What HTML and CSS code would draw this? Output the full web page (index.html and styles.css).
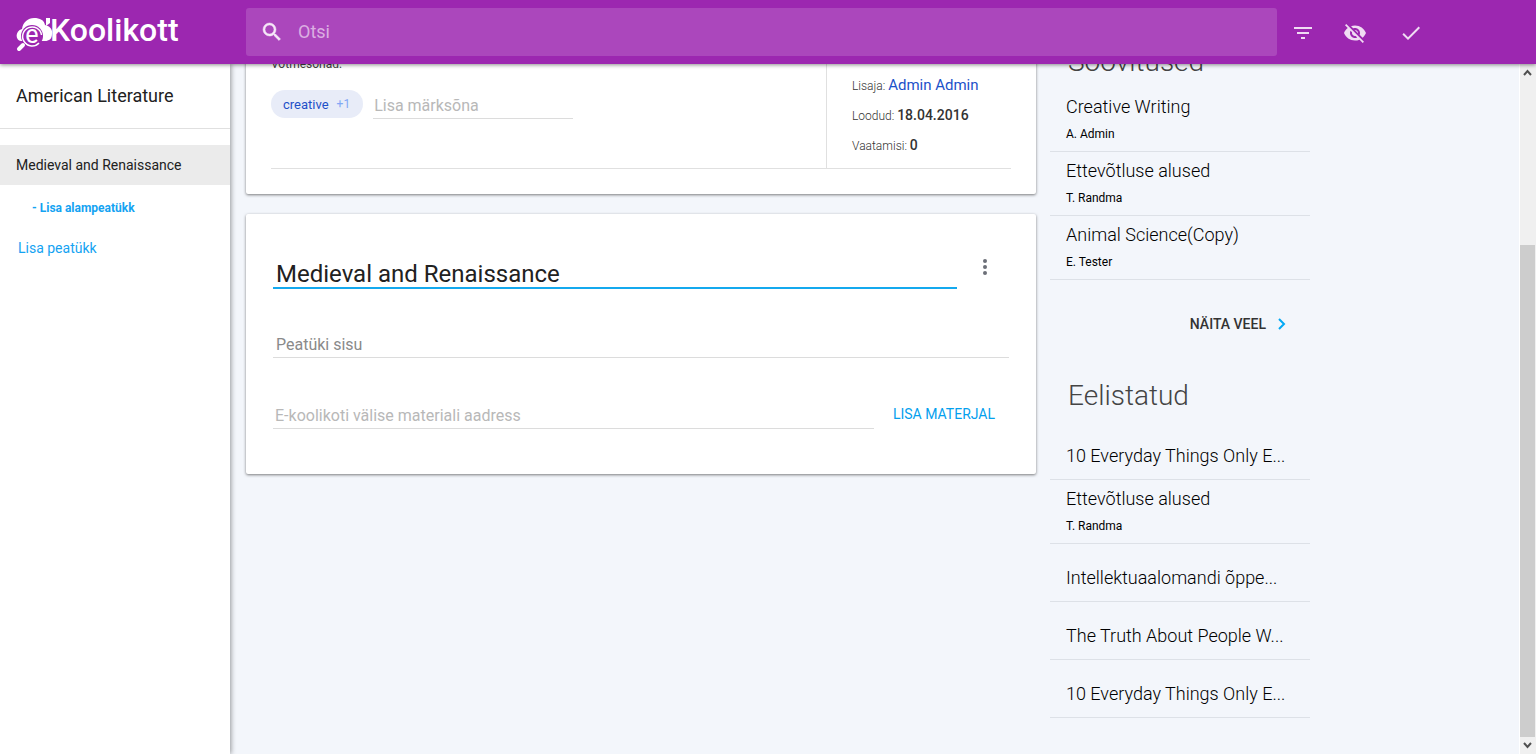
FILE: index.html
```html
<!DOCTYPE html>
<html lang="et">
<head>
<meta charset="utf-8">
<title>eKoolikott</title>
<link rel="stylesheet" href="styles.css">
</head>
<body>
<header class="topbar">
  <a class="logo" href="#" aria-label="eKoolikott">
    <svg class="logo-mark" width="38" height="36" viewBox="0 0 38 36">
      <path fill="#fff" d="M5 25C-1 24 -1 15 6 13C7 6 12 2 18 2C24 2 28 4 29 9C34 10 37 14 36 18C36 23 33 25 29 25L12 25Z"/>
      <path fill="#fff" d="M30 2h4v5l-4 3z"/>
      <circle cx="16" cy="20" r="11" fill="#9c27b0"/>
      <path d="M23 27A9.500 9.500 0 1 1 25.500 19" fill="none" stroke="#fff" stroke-width="1.500"/>
      <path d="M9 28L3 34" stroke="#9c27b0" stroke-width="7"/>
      <path d="M7 29L3 33" stroke="#fff" stroke-width="4" stroke-linecap="round"/>
      <text x="16" y="27" text-anchor="middle" class="logo-e">e</text>
    </svg>
    <span class="logo-text">Koolikott</span>
  </a>
  <label class="search">
    <svg width="24" height="24" viewBox="0 0 24 24"><path fill="currentColor" stroke="currentColor" stroke-width=".5" d="M15.5 14h-.79l-.28-.27A6.47 6.47 0 0 0 16 9.5 6.5 6.5 0 1 0 9.500 16c1.610 0 3.090-.59 4.230-1.570l.27.28v.79l5 4.990L20.490 19l-4.990-5zm-6 0C7.010 14 5 11.990 5 9.500S7.010 5 9.500 5 14 7.010 14 9.500 11.990 14 9.500 14z"/></svg>
    <input class="search-input" type="text" placeholder="Otsi" aria-label="Otsi">
  </label>
  <nav class="actions">
    <button class="icon-btn" aria-label="Filter"><svg width="24" height="24" viewBox="0 0 24 24"><path fill="currentColor" d="M10 18h4v-2h-4v2zM3 6v2h18V6H3zm3 7h12v-2H6v2z"/></svg></button>
    <button class="icon-btn" aria-label="Peida"><svg width="24" height="24" viewBox="0 0 24 24"><path fill="currentColor" d="M12 7c2.760 0 5 2.240 5 5 0 .65-.13 1.260-.36 1.830l2.920 2.920c1.510-1.260 2.700-2.890 3.430-4.750-1.730-4.390-6-7.500-11-7.500-1.400 0-2.740.25-3.980.7l2.160 2.160C10.740 7.130 11.350 7 12 7zM2 4.270l2.280 2.280.46.46C3.080 8.300 1.780 10.020 1 12c1.730 4.390 6 7.500 11 7.500 1.550 0 3.030-.3 4.380-.84l.42.42L19.730 22 21 20.730 3.270 3 2 4.270zM7.530 9.800l1.550 1.550c-.05.21-.08.43-.08.65 0 1.660 1.340 3 3 3 .22 0 .44-.03.65-.08l1.550 1.550c-.67.33-1.410.53-2.200.53-2.760 0-5-2.240-5-5 0-.79.2-1.530.53-2.200zm4.310-.78l3.150 3.150.02-.16c0-1.660-1.340-3-3-3l-.17.01z"/></svg></button>
    <button class="icon-btn" aria-label="Salvesta"><svg width="24" height="24" viewBox="0 0 24 24"><path fill="currentColor" d="M9 16.170L4.830 12l-1.420 1.410L9 19 21 7l-1.410-1.410z"/></svg></button>
  </nav>
</header>
<div class="body">
  <aside class="toc">
    <h2 class="toc-title">American Literature</h2>
    <a class="toc-item" href="#chapter">Medieval and Renaissance</a>
    <a class="toc-sub" href="#">- Lisa alampeatükk</a>
    <a class="toc-add" href="#">Lisa peatükk</a>
  </aside>
  <div class="page">
    <main class="main">
      <section class="card info">
        <div class="info-grid">
          <div class="tags">
            <div class="tags-label">Võtmesõnad:</div>
            <div class="tags-row">
              <button class="chip">creative <span class="chip-count">+1</span></button>
              <input class="field tag-input" type="text" placeholder="Lisa märksõna" aria-label="Lisa märksõna">
            </div>
          </div>
          <div class="meta">
            <div>Lisaja: <a class="author" href="#">Admin Admin</a></div>
            <div>Loodud: <b>18.04.2016</b></div>
            <div>Vaatamisi: <b>0</b></div>
          </div>
        </div>
      </section>
      <section class="card chapter" id="chapter">
        <div class="title-row">
          <input class="field title-input" type="text" value="Medieval and Renaissance" aria-label="Pealkiri">
          <button class="icon-btn more" aria-label="Rohkem"><svg width="24" height="24" viewBox="0 0 24 24"><g fill="#6c6f78"><circle cx="12" cy="6" r="2"/><circle cx="12" cy="12" r="2"/><circle cx="12" cy="18" r="2"/></g></svg></button>
        </div>
        <input class="field body-input" type="text" placeholder="Peatüki sisu" aria-label="Peatüki sisu">
        <div class="material-row">
          <input class="field url-input" type="text" placeholder="E-koolikoti välise materiali aadress" aria-label="E-koolikoti välise materiali aadress">
          <button class="add-btn">LISA MATERJAL</button>
        </div>
      </section>
    </main>
    <aside class="related">
      <h3 class="heading first">Soovitused</h3>
      <ul class="list">
        <li><a class="item" href="#"><span class="name">Creative Writing</span><span class="by">A. Admin</span></a></li>
        <li><a class="item" href="#"><span class="name">Ettevõtluse alused</span><span class="by">T. Randma</span></a></li>
        <li><a class="item" href="#"><span class="name">Animal Science(Copy)</span><span class="by">E. Tester</span></a></li>
      </ul>
      <button class="show-more">NÄITA VEEL <svg width="8" height="12" viewBox="0 0 8 12"><path d="M1 1l5 5-5 5" fill="none" stroke="#03a9f4" stroke-width="2"/></svg></button>
      <h3 class="heading">Eelistatud</h3>
      <ul class="list">
        <li><a class="item single" href="#"><span class="name">10 Everyday Things Only E...</span></a></li>
        <li><a class="item" href="#"><span class="name">Ettevõtluse alused</span><span class="by">T. Randma</span></a></li>
        <li><a class="item single" href="#"><span class="name">Intellektuaalomandi õppe...</span></a></li>
        <li><a class="item single" href="#"><span class="name">The Truth About People W...</span></a></li>
        <li><a class="item single" href="#"><span class="name">10 Everyday Things Only E...</span></a></li>
      </ul>
    </aside>
  </div>
  <div class="scrollbar" aria-hidden="true">
    <svg width="15" height="17" viewBox="0 0 15 17"><path d="M4 11l3.500-4 3.500 4" fill="none" stroke="#505050" stroke-width="2"/></svg>
    <div class="thumb"></div>
    <svg width="15" height="17" viewBox="0 0 15 17"><path d="M4 6l3.500 4 3.500-4" fill="none" stroke="#505050" stroke-width="2"/></svg>
  </div>
</div>
</body>
</html>
```
FILE: styles.css
```css
* { box-sizing: border-box; }
body {
  margin: 0;
  height: 100vh;
  display: flex;
  flex-direction: column;
  overflow: hidden;
  background: #f3f6fb;
  color: #212121;
  font-family: Roboto, "Liberation Sans", sans-serif;
  font-size: 14px;
}
a { color: inherit; text-decoration: none; }
button { border: 0; padding: 0; background: none; font: inherit; color: inherit; cursor: pointer; }
svg { display: block; flex: none; }

.topbar {
  position: relative;
  z-index: 2;
  flex: none;
  height: 64px;
  display: flex;
  align-items: center;
  background: #9c27b0;
  box-shadow: 0 1px 4px rgba(0, 0, 0, .45);
}
.logo { flex: none; width: 246px; padding-left: 16px; display: flex; align-items: center; color: #fff; }
.logo-mark { margin-top: 4px; }
.logo-e { font: 400 25px Roboto, sans-serif; fill: #fff; }
.logo-text { margin: -4px 0 0 -4px; font-size: 32px; font-weight: 500; line-height: 36px; }
.search {
  flex: 1;
  height: 48px;
  display: flex;
  align-items: center;
  gap: 12px;
  padding: 0 14px;
  border-radius: 3px;
  background: #ab47bc;
  color: #f6e8f8;
}
.search-input { flex: 1; min-width: 0; border: 0; outline: 0; padding: 0 2px 2px; background: none; color: #fff; font: 18px Roboto, sans-serif; }
.search-input::placeholder { color: #dbaee2; opacity: 1; }
.actions { flex: none; width: 259px; padding: 2px 0 0 14px; display: flex; gap: 28px; color: #f0dcf3; }
.icon-btn:last-child { margin-left: 4px; }

.body { flex: 1; min-height: 0; display: flex; }
.toc {
  position: relative;
  z-index: 1;
  flex: none;
  width: 230px;
  display: flex;
  flex-direction: column;
  background: #fff;
  box-shadow: 1px 0 5px rgba(0, 0, 0, .4);
}
.toc-title { margin: 0 0 16px; padding: 0 16px; border-bottom: 1px solid #e0e0e0; font-size: 18px; font-weight: 400; line-height: 64px; }
.toc-item { padding: 0 16px; background: #ebebeb; line-height: 40px; }
.toc-sub { padding: 0 32px; color: #14a3f2; font-size: 12px; font-weight: 700; line-height: 46px; }
.toc-add { padding: 0 18px; color: #14a3f2; line-height: 34px; }

.page {
  flex: 1;
  min-width: 0;
  overflow: hidden;
  display: grid;
  grid-template-columns: minmax(0, 790px) 260px;
  align-items: start;
  gap: 14px;
  padding-left: 16px;
}
.main { display: flex; flex-direction: column; gap: 20px; }
.card { background: #fff; border-radius: 2px; box-shadow: 0 1px 3px rgba(0, 0, 0, .5); }
.info { margin-top: -8px; padding: 0 25px 25px; }
.info-grid { display: flex; border-bottom: 1px solid #e0e0e0; }
.tags { flex: 1; min-width: 0; }
.tags-label { color: #424242; font-size: 12px; line-height: 16px; }
.tags-row { display: flex; align-items: flex-start; gap: 10px; margin-top: 18px; }
.chip { height: 28px; padding: 0 13px 0 12px; display: flex; align-items: center; gap: 8px; border-radius: 14px; background: #e8ecf8; color: #1f50c8; font-size: 13px; }
.chip-count { color: #82a7f5; font-size: 12px; }
.field { min-width: 0; border: 0; border-bottom: 1px solid #dcdcdc; border-radius: 0; outline: 0; background: none; color: #212121; font: 16px Roboto, sans-serif; }
.field::placeholder { color: #b8b8b8; opacity: 1; }
.tag-input { width: 200px; height: 29px; padding: 3px 1px 0; }
.meta { width: 185px; padding: 14px 0 8px 25px; border-left: 1px solid #e0e0e0; color: #333; font-size: 12px; font-weight: 300; }
.meta div { height: 30px; line-height: 30px; }
.meta b { font-size: 14px; font-weight: 500; }
.author { color: #1c51c9; font-size: 15px; font-weight: 400; }

.chapter { padding: 40px 27px 45px; }
.title-row { display: flex; align-items: flex-start; }
.title-input { flex: 1; height: 35px; padding: 6px 3px 0; border-bottom: 2px solid #14a9ee; font-size: 24px; }
.title-input + .more { margin: 1px 12px 0 16px; }
.body-input { width: 100%; height: 30px; margin-top: 39px; padding: 4px 3px 0; }
.body-input::placeholder { color: #8a8a8a; }
.material-row { display: flex; align-items: center; gap: 19px; margin-top: 40px; }
.url-input { flex: 1; height: 31px; padding: 4px 2px 0; }
.add-btn { margin-right: 14px; color: #03a0ee; }

.related { margin-top: -22px; }
.heading { margin: 0; padding-left: 18px; color: #444; font-size: 28px; font-weight: 300; line-height: 36px; }
.heading.first { padding-top: 2px; margin-bottom: 8px; }
.list { margin: 0; padding: 0; list-style: none; }
.item { display: block; height: 64px; padding: 10px 16px 0; border-bottom: 1px solid #dde1e7; color: #000; }
.item.single { height: 58px; padding-top: 25px; }
.name { display: block; white-space: nowrap; font-size: 18px; font-weight: 300; line-height: 18px; }
.by { display: block; margin-top: 10px; font-size: 12px; line-height: 16px; }
.show-more { margin: 33px 24px 43px auto; display: flex; align-items: center; gap: 12px; color: #333; font-weight: 500; line-height: 22px; }
.show-more + .heading { margin-bottom: 8px; }

.scrollbar { flex: none; width: 17px; display: flex; flex-direction: column; border-left: 1px solid #fff; background: #f0f0f0; }
.thumb { flex: 1; margin: 164px 1px 0 0; background: #cdcdcd; }
```
